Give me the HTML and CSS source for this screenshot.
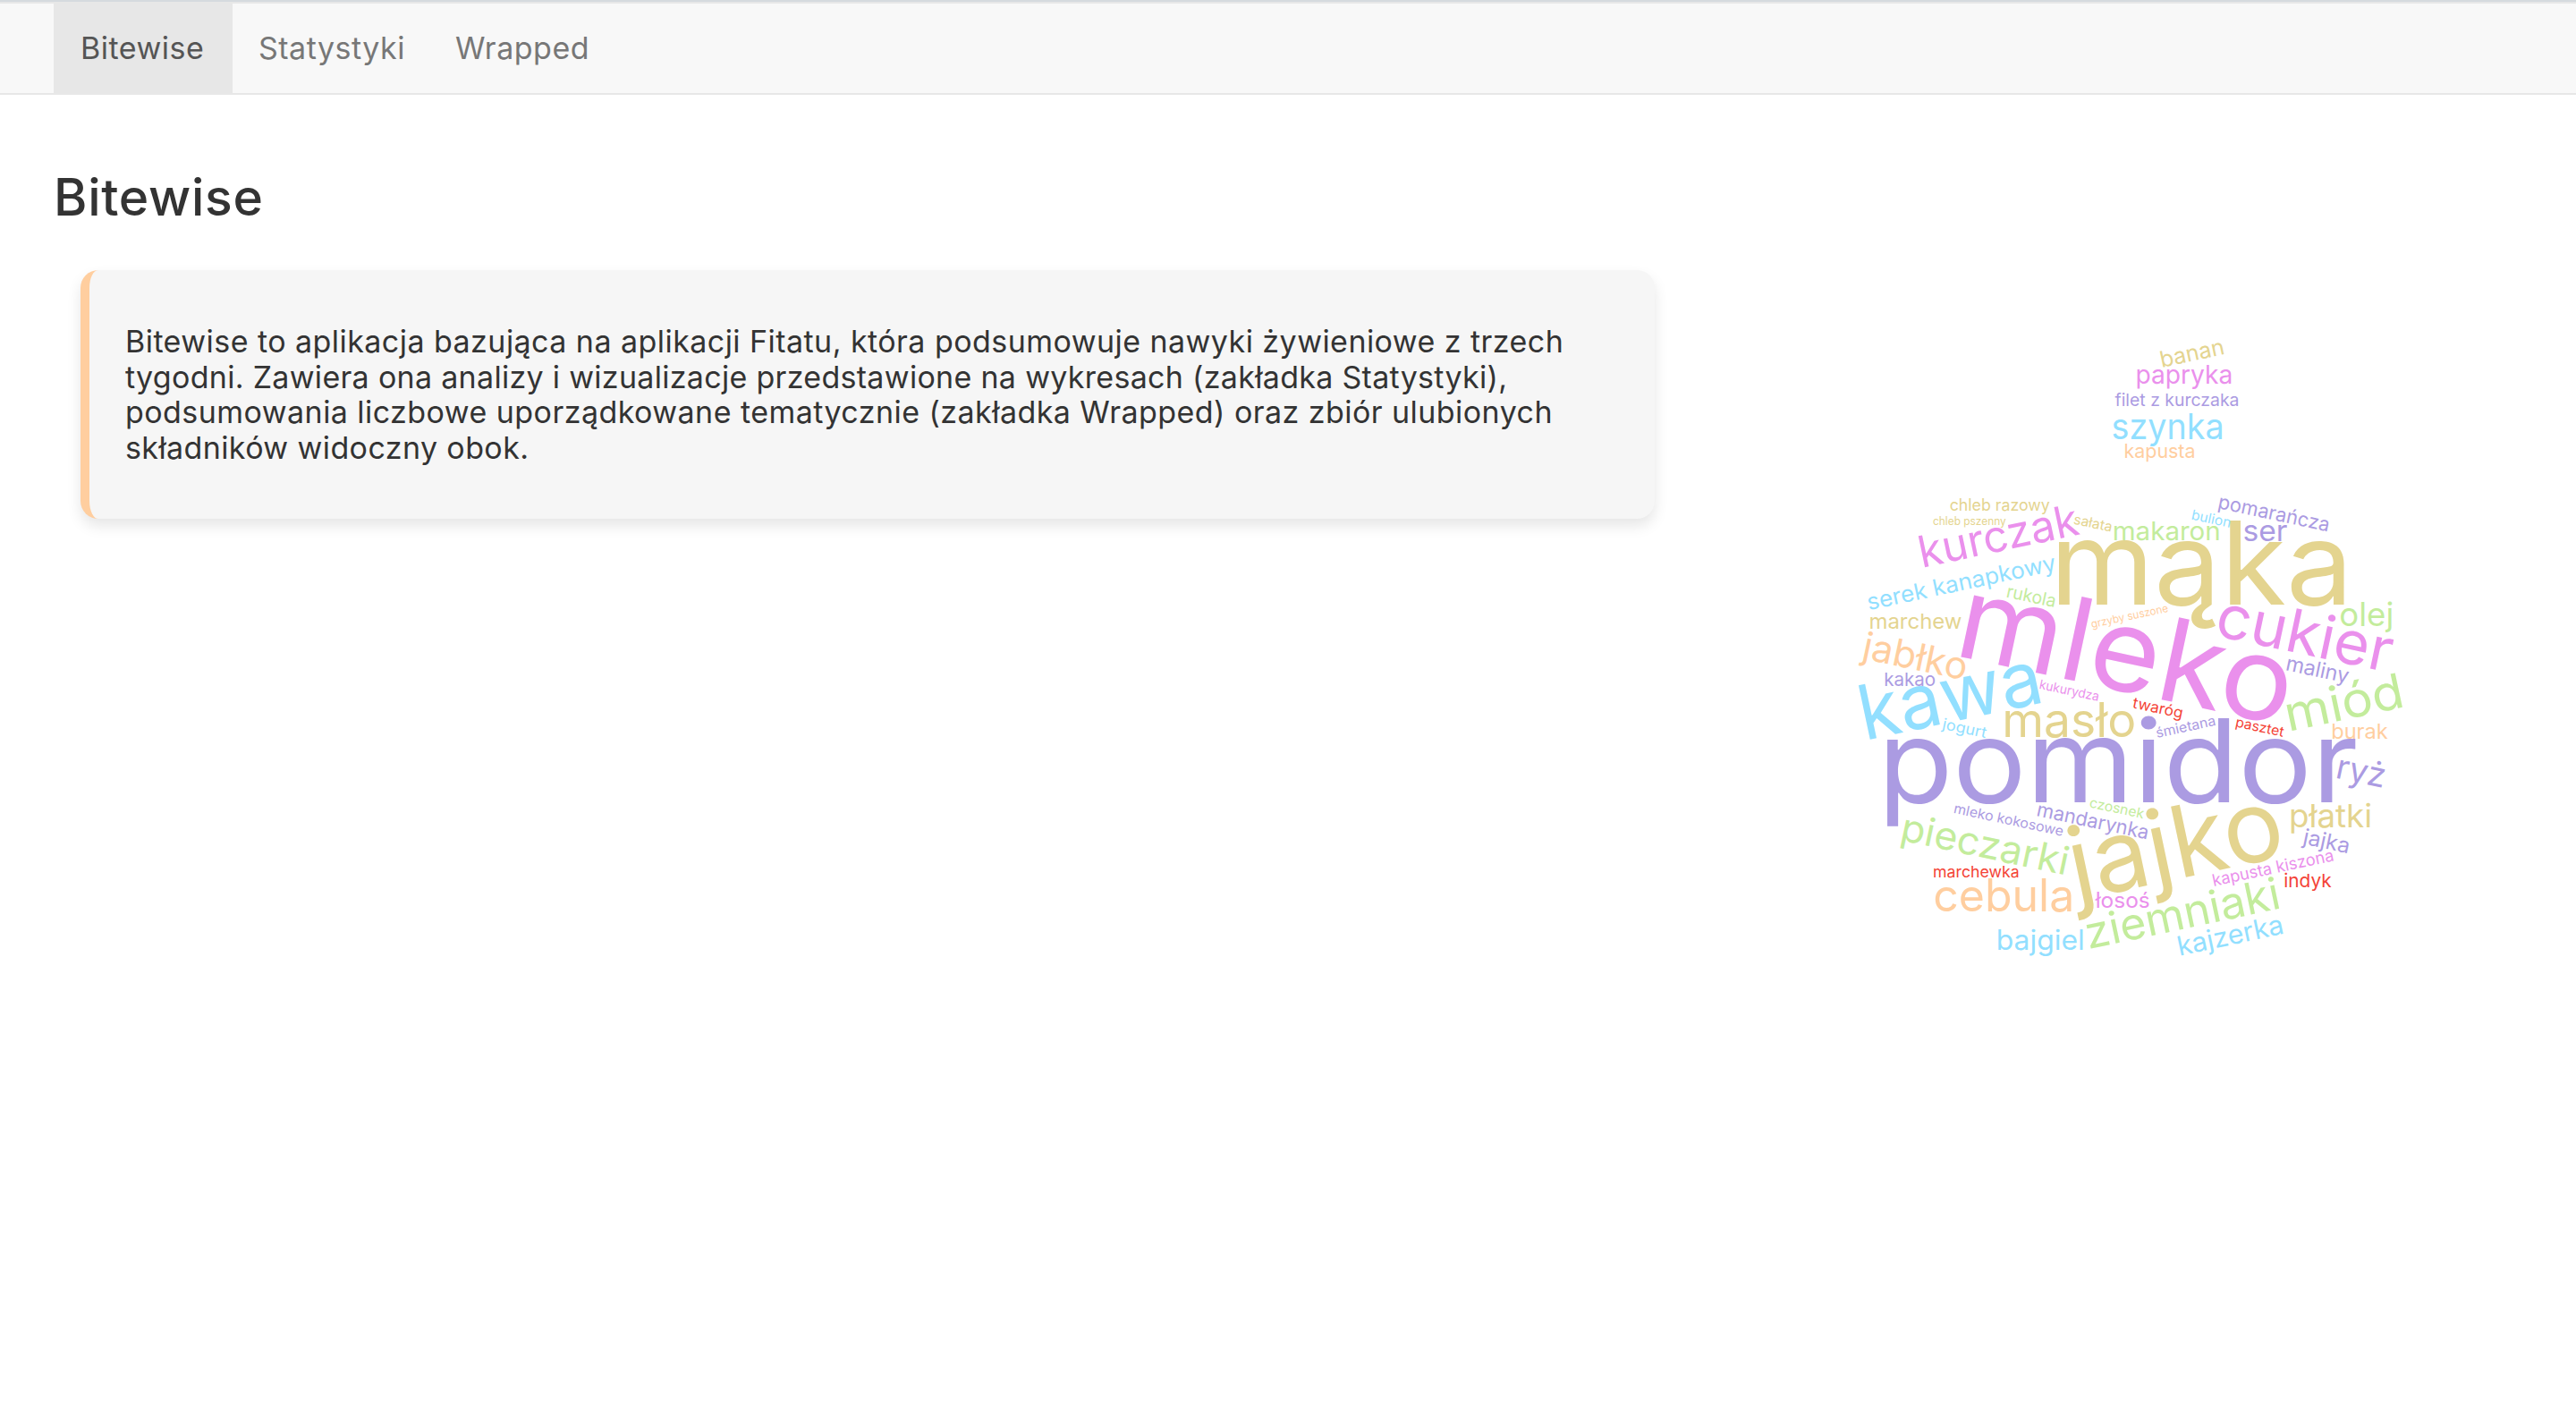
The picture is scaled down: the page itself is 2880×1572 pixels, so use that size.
FILE: index.html
```html
<!DOCTYPE html>
<html lang="pl">
<head>
<meta charset="utf-8">
<title>Bitewise</title>
<link rel="stylesheet" href="styles.css">
</head>
<body>
<nav class="navbar">
  <a class="tab tab-home active">Bitewise</a>
  <a class="tab tab-stats">Statystyki</a>
  <a class="tab tab-wrapped">Wrapped</a>
</nav>
<main class="page">
  <h2 class="title">Bitewise</h2>
  <div class="row">
    <section class="card">
      <p class="intro"><span class="l1">Bitewise to aplikacja bazująca na aplikacji Fitatu, która podsumowuje nawyki żywieniowe z trzech</span>
      <span class="l2">tygodni. Zawiera ona analizy i wizualizacje przedstawione na wykresach (zakładka Statystyki),</span>
      <span class="l3">podsumowania liczbowe uporządkowane tematycznie (zakładka Wrapped) oraz zbiór ulubionych</span>
      <span class="l4">składników widoczny obok.</span></p>
    </section>
    <svg class="cloud" viewBox="2020 302 720 800" width="720" height="800">
      <g class="khaki">
        <text transform="translate(2418 410.7) rotate(-12)" x="-.055em" font-size="25" textLength="73" lengthAdjust="spacingAndGlyphs">banan</text>
        <text transform="translate(2180.7 571.3)" x="-.055em" font-size="18" textLength="112" lengthAdjust="spacingAndGlyphs">chleb razowy</text>
        <text transform="translate(2161.7 587.3)" x="-.055em" font-size="12.5" textLength="81.7" lengthAdjust="spacingAndGlyphs">chleb pszenny</text>
        <text transform="translate(2318.3 585.7) rotate(12)" x="-.055em" font-size="15.5" textLength="44" lengthAdjust="spacingAndGlyphs">sałata</text>
        <text transform="translate(2301.3 676.3)" x="-.075em" font-size="129" textLength="339" lengthAdjust="spacingAndGlyphs">mąka</text>
        <text transform="translate(2090.7 702.7)" x="-.055em" font-size="23.5" textLength="104" lengthAdjust="spacingAndGlyphs">marchew</text>
        <text transform="translate(2241.7 823.7)" x="-.065em" font-size="53" textLength="150" lengthAdjust="spacingAndGlyphs">masło</text>
        <text transform="translate(2561 924.7)" x="-.055em" font-size="35.5" textLength="93" lengthAdjust="spacingAndGlyphs">płatki</text>
        <text transform="translate(2327 1005.5) rotate(-12)" x="-.055em" font-size="111" textLength="243" lengthAdjust="spacingAndGlyphs">jajko</text>
      </g>
      <g class="pink">
        <text transform="translate(2389 429)" x="-.055em" font-size="29" textLength="109" lengthAdjust="spacingAndGlyphs">papryka</text>
        <text transform="translate(2151.7 634.3) rotate(-12)" x="-.065em" font-size="49" textLength="182" lengthAdjust="spacingAndGlyphs">kurczak</text>
        <text transform="translate(2191.7 734.3) rotate(12)" x="-.075em" font-size="129" textLength="381" lengthAdjust="spacingAndGlyphs">mleko</text>
        <text transform="translate(2280 770) rotate(12)" x="-.055em" font-size="14.5" textLength="68" lengthAdjust="spacingAndGlyphs">kukurydza</text>
        <text transform="translate(2478 711) rotate(12)" x="-.055em" font-size="67" textLength="200" lengthAdjust="spacingAndGlyphs">cukier</text>
        <text transform="translate(2475.7 990.7) rotate(-12)" x="-.055em" font-size="18.5" textLength="138.5" lengthAdjust="spacingAndGlyphs">kapusta kiszona</text>
        <text transform="translate(2344 1015)" x="-.055em" font-size="23.7" textLength="61" lengthAdjust="spacingAndGlyphs">łosoś</text>
      </g>
      <g class="violet">
        <text transform="translate(2365.5 454.3)" x="-.055em" font-size="19" textLength="139" lengthAdjust="spacingAndGlyphs">filet z kurczaka</text>
        <text transform="translate(2107.3 766.7)" x="-.055em" font-size="20.5" textLength="58" lengthAdjust="spacingAndGlyphs">kakao</text>
        <text transform="translate(2480 568.3) rotate(12)" x="-.055em" font-size="22" textLength="127" lengthAdjust="spacingAndGlyphs">pomarańcza</text>
        <text transform="translate(2509.3 605.3)" x="-.055em" font-size="32.5" textLength="50" lengthAdjust="spacingAndGlyphs">ser</text>
        <text transform="translate(2555.7 749.3) rotate(12)" x="-.055em" font-size="23.5" textLength="71.5" lengthAdjust="spacingAndGlyphs">maliny</text>
        <text transform="translate(2412.3 824.7) rotate(-12)" x="-.055em" font-size="15.5" textLength="68" lengthAdjust="spacingAndGlyphs">śmietana</text>
        <text transform="translate(2109.7 897)" x="-.08em" font-size="129" textLength="537" lengthAdjust="spacingAndGlyphs">pomidor</text>
        <text transform="translate(2612.3 870) rotate(12)" x="-.065em" font-size="38" textLength="56" lengthAdjust="spacingAndGlyphs">ryż</text>
        <text transform="translate(2575 943.5) rotate(12)" x="-.055em" font-size="24" textLength="53" lengthAdjust="spacingAndGlyphs">jajka</text>
        <text transform="translate(2184.3 909) rotate(12)" x="-.055em" font-size="15.5" textLength="125" lengthAdjust="spacingAndGlyphs">mleko kokosowe</text>
        <text transform="translate(2277.3 912.3) rotate(12)" x="-.055em" font-size="22" textLength="127.5" lengthAdjust="spacingAndGlyphs">mandarynka</text>
      </g>
      <g class="sky">
        <text transform="translate(2362.7 490.7)" x="-.055em" font-size="39" textLength="126" lengthAdjust="spacingAndGlyphs">szynka</text>
        <text transform="translate(2090.5 682) rotate(-12)" x="-.055em" font-size="25.5" textLength="215.5" lengthAdjust="spacingAndGlyphs">serek kanapkowy</text>
        <text transform="translate(2090.7 826.7) rotate(-12)" x="-.075em" font-size="85" textLength="208" lengthAdjust="spacingAndGlyphs">kawa</text>
        <text transform="translate(2450 580.7) rotate(12)" x="-.055em" font-size="15.5" textLength="45" lengthAdjust="spacingAndGlyphs">bulion</text>
        <text transform="translate(2171.7 815) rotate(12)" x="-.055em" font-size="17" textLength="50" lengthAdjust="spacingAndGlyphs">jogurt</text>
        <text transform="translate(2233.7 1062)" x="-.065em" font-size="31" textLength="99" lengthAdjust="spacingAndGlyphs">bajgiel</text>
        <text transform="translate(2438.3 1068.3) rotate(-12)" x="-.065em" font-size="30" textLength="121" lengthAdjust="spacingAndGlyphs">kajzerka</text>
      </g>
      <g class="green">
        <text transform="translate(2363.3 603.7)" x="-.055em" font-size="28.5" textLength="121" lengthAdjust="spacingAndGlyphs">makaron</text>
        <text transform="translate(2243.3 667.7) rotate(12)" x="-.055em" font-size="20" textLength="56" lengthAdjust="spacingAndGlyphs">rukola</text>
        <text transform="translate(2617.3 700)" x="-.055em" font-size="36.5" textLength="61" lengthAdjust="spacingAndGlyphs">olej</text>
        <text transform="translate(2561.7 817.3) rotate(-12)" x="-.065em" font-size="54" textLength="135" lengthAdjust="spacingAndGlyphs">miód</text>
        <text transform="translate(2126.7 939.7) rotate(12)" x="-.09em" font-size="43" textLength="191" lengthAdjust="spacingAndGlyphs">pieczarki</text>
        <text transform="translate(2336 902.5) rotate(12)" x="-.055em" font-size="15.5" textLength="62" lengthAdjust="spacingAndGlyphs">czosnek</text>
        <text transform="translate(2337.3 1060.7) rotate(-12)" x="-.055em" font-size="49" textLength="222" lengthAdjust="spacingAndGlyphs">ziemniaki</text>
      </g>
      <g class="peach">
        <text transform="translate(2375.7 512.3)" x="-.055em" font-size="22" textLength="80" lengthAdjust="spacingAndGlyphs">kapusta</text>
        <text transform="translate(2084.3 736.7) rotate(12)" x="-.1em" font-size="42" textLength="119" lengthAdjust="spacingAndGlyphs">jabłko</text>
        <text transform="translate(2339.3 702) rotate(-12)" x="-.055em" font-size="12.5" textLength="88" lengthAdjust="spacingAndGlyphs">grzyby suszone</text>
        <text transform="translate(2607.7 825.7)" x="-.065em" font-size="23" textLength="63.5" lengthAdjust="spacingAndGlyphs">burak</text>
        <text transform="translate(2164 1019)" x="-.055em" font-size="50" textLength="158" lengthAdjust="spacingAndGlyphs">cebula</text>
      </g>
      <g class="red">
        <text transform="translate(2384.5 791.5) rotate(12)" x="-.055em" font-size="17" textLength="57" lengthAdjust="spacingAndGlyphs">twaróg</text>
        <text transform="translate(2499.3 812.5) rotate(12)" x="-.055em" font-size="15.5" textLength="55" lengthAdjust="spacingAndGlyphs">pasztet</text>
        <text transform="translate(2554.3 991.7)" x="-.055em" font-size="20.5" textLength="53.5" lengthAdjust="spacingAndGlyphs">indyk</text>
        <text transform="translate(2162 980.7)" x="-.055em" font-size="17.5" textLength="96.7" lengthAdjust="spacingAndGlyphs">marchewka</text>
      </g>
    </svg>
  </div>
</main>
</body>
</html>
```
FILE: styles.css
```css
* { box-sizing: border-box; }
body {
  margin: 0;
  background: #fff;
  color: #333;
  font-family: Inter, "Noto Sans", sans-serif;
}
.navbar {
  display: flex;
  height: 106px;
  padding-left: 60px;
  background: #f8f8f8;
  border-top: 2px solid #d5dade;
  border-bottom: 2px solid #e7e7e7;
  box-shadow: inset 0 2px #e7e7e7;
}
.tab {
  height: 102px;
  padding: 0 29px;
  font-size: 34px;
  font-weight: 400;
  line-height: 104px;
  letter-spacing: .5px;
  color: #777;
  white-space: nowrap;
}
.tab.active { background: #e7e7e7; color: #555; }
.tab-home { width: 200px; padding-left: 30px; }
.tab-stats { width: 220px; }
.page { padding: 0 60px; }
.title {
  margin: 74px 0 0;
  font-size: 57px;
  font-weight: 500;
  line-height: 82px;
  letter-spacing: .7px;
}
.row { display: flex; align-items: flex-start; margin-top: 40px; }
.card {
  width: 1760px;
  height: 278px;
  margin: 0 170px 0 30px;
  padding: 60px 0 0 40px;
  background: #f6f6f6;
  border-left: 10px solid #ffce9f;
  border-radius: 20px;
  box-shadow: 0 8px 16px rgba(0, 0, 0, .1);
}
.intro {
  margin: 0;
  font-size: 34px;
  line-height: 39.6px;
  letter-spacing: .45px;
  white-space: nowrap;
}
.intro span { display: block; }
.intro .l2 { letter-spacing: .3px; }
.intro .l4 { letter-spacing: .4px; }
.cloud { display: block; flex: none; font-weight: 400; }
.khaki { fill: #e4d48f; }
.pink { fill: #ea90ec; }
.violet { fill: #ab9be2; }
.sky { fill: #92dfff; }
.green { fill: #c3ec9c; }
.peach { fill: #ffce9f; }
.red { fill: #f44336; }
```
